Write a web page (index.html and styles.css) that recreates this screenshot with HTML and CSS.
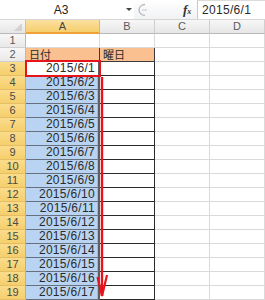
FILE: index.html
```html
<!DOCTYPE html>
<html lang="ja">
<head>
    <meta charset="UTF-8">
    <title>日付 - Excel</title>
    <link rel="stylesheet" href="styles.css">
</head>
<body>
    <div class="page">
        <div class="fbar">
            <div class="namebox"><span class="ref">A3</span><span class="drop"></span></div>
            <div class="grip">
                <svg width="14" height="14" viewBox="0 0 14 14">
                    <path d="M10 1.5 A6 5.5 0 0 0 10 12.5" fill="none" stroke="#b4b8be" stroke-width="1.3"/>
                    <path d="M7 7 H12" stroke="#c2c5ca" stroke-width="1"/>
                </svg>
            </div>
            <div class="fx"><i>f</i><small>x</small></div>
            <div class="formula">2015/6/1</div>
        </div>

        <div class="sheet">
            <div class="corner"><span class="tri"></span></div>
            <div class="col-head sel">A</div>
            <div class="col-head">B</div>
            <div class="col-head">C</div>
            <div class="col-head">D</div>

            <div class="row-head">1</div><div class="cell"></div><div class="cell"></div><div class="cell"></div><div class="cell"></div>
            <div class="row-head">2</div><div class="cell title">日付</div><div class="cell title last">曜日</div><div class="cell"></div><div class="cell"></div>
            <div class="row-head sel">3</div><div class="cell date active">2015/6/1</div><div class="cell boxed"></div><div class="cell"></div><div class="cell"></div>
            <div class="row-head sel">4</div><div class="cell date pick">2015/6/2</div><div class="cell boxed"></div><div class="cell"></div><div class="cell"></div>
            <div class="row-head sel">5</div><div class="cell date pick">2015/6/3</div><div class="cell boxed"></div><div class="cell"></div><div class="cell"></div>
            <div class="row-head sel">6</div><div class="cell date pick">2015/6/4</div><div class="cell boxed"></div><div class="cell"></div><div class="cell"></div>
            <div class="row-head sel">7</div><div class="cell date pick">2015/6/5</div><div class="cell boxed"></div><div class="cell"></div><div class="cell"></div>
            <div class="row-head sel">8</div><div class="cell date pick">2015/6/6</div><div class="cell boxed"></div><div class="cell"></div><div class="cell"></div>
            <div class="row-head sel">9</div><div class="cell date pick">2015/6/7</div><div class="cell boxed"></div><div class="cell"></div><div class="cell"></div>
            <div class="row-head sel">10</div><div class="cell date pick">2015/6/8</div><div class="cell boxed"></div><div class="cell"></div><div class="cell"></div>
            <div class="row-head sel">11</div><div class="cell date pick">2015/6/9</div><div class="cell boxed"></div><div class="cell"></div><div class="cell"></div>
            <div class="row-head sel">12</div><div class="cell date pick">2015/6/10</div><div class="cell boxed"></div><div class="cell"></div><div class="cell"></div>
            <div class="row-head sel">13</div><div class="cell date pick">2015/6/11</div><div class="cell boxed"></div><div class="cell"></div><div class="cell"></div>
            <div class="row-head sel">14</div><div class="cell date pick">2015/6/12</div><div class="cell boxed"></div><div class="cell"></div><div class="cell"></div>
            <div class="row-head sel">15</div><div class="cell date pick">2015/6/13</div><div class="cell boxed"></div><div class="cell"></div><div class="cell"></div>
            <div class="row-head sel">16</div><div class="cell date pick">2015/6/14</div><div class="cell boxed"></div><div class="cell"></div><div class="cell"></div>
            <div class="row-head sel">17</div><div class="cell date pick">2015/6/15</div><div class="cell boxed"></div><div class="cell"></div><div class="cell"></div>
            <div class="row-head sel">18</div><div class="cell date pick">2015/6/16</div><div class="cell boxed"></div><div class="cell"></div><div class="cell"></div>
            <div class="row-head sel">19</div><div class="cell date pick">2015/6/17</div><div class="cell boxed"></div><div class="cell"></div><div class="cell"></div>
        </div>

        <!-- annotations drawn over the sheet -->
        <div class="mark"></div>
        <svg class="arrow" width="265" height="300" viewBox="0 0 265 300">
            <path d="M102 77 V296" stroke="#e8141c" stroke-width="2.4" fill="none"/>
            <path d="M97.5 277 L102 296 L107 275" stroke="#e8141c" stroke-width="2.2" fill="none"/>
        </svg>
    </div>
</body>
</html>
```

FILE: styles.css
```css
body {
    margin: 0;
    background: #ffffff;
    font-family: "Liberation Sans", "Noto Sans CJK JP", sans-serif;
    color: #2a2a2a;
    overflow: hidden;
}
.page {
    position: relative;
    width: 265px;
    height: 300px;
    overflow: hidden;
}
.fbar {
    height: 20px;
    display: flex;
    box-sizing: border-box;
    border-bottom: 1px solid #d5d5d5;
    background: #ffffff;
}
.namebox {
    width: 134px;
    display: flex;
    align-items: center;
    font-size: 12px;
    color: #222;
}
.namebox .ref {
    width: 122px;
    text-align: center;
}
.namebox .drop {
    width: 0;
    height: 0;
    margin-left: 4px;
    border-left: 3px solid transparent;
    border-right: 3px solid transparent;
    border-top: 3px solid #444;
}
.grip {
    width: 44px;
    display: flex;
    align-items: center;
    padding-left: 1px;
    background: linear-gradient(#ffffff, #f1f2f4);
}
.fx {
    width: 18px;
    display: flex;
    align-items: center;
    font-family: "Liberation Serif", serif;
    font-weight: bold;
    color: #333;
    background: linear-gradient(#ffffff, #f1f2f4);
}
.fx i {
    font-size: 13px;
    margin-left: 4px;
}
.fx small {
    font-size: 8px;
    font-style: italic;
    margin-top: 4px;
}
.formula {
    flex: 1;
    border-left: 1px solid #c9c9c9;
    border-top: 1px solid #dcdcdc;
    padding-left: 4px;
    font-size: 12px;
    letter-spacing: 0.3px;
    line-height: 18px;
}
.sheet {
    display: grid;
    grid-template-columns: 26px 74px 55px 55px 55px;
    grid-auto-rows: 14px;
    font-size: 12px;
}
.sheet > div {
    box-sizing: border-box;
}
.corner {
    position: relative;
    background: linear-gradient(#f7f7f7, #e6e6e6);
    border-right: 1px solid #c2c2c2;
    border-bottom: 1px solid #b9b9b9;
}
.corner .tri {
    position: absolute;
    right: 3px;
    bottom: 2px;
    width: 0;
    height: 0;
    border-left: 8px solid transparent;
    border-bottom: 8px solid #d2d2d2;
}
.col-head {
    background: linear-gradient(#f7f7f7, #e6e6e6);
    border-right: 1px solid #cfcfcf;
    border-bottom: 1px solid #b9b9b9;
    text-align: center;
    font-size: 11px;
    line-height: 13px;
    color: #5a5a5a;
}
.col-head.sel {
    background: linear-gradient(#fbe0a0, #f6cf6e);
    border-right-color: #e2b563;
    border-bottom: 2px solid #f0a33a;
    color: #444;
}
.row-head {
    background: linear-gradient(#f7f7f7, #e9e9e9);
    border-right: 1px solid #b9b9b9;
    border-bottom: 1px solid #d0d0d0;
    text-align: center;
    font-size: 11px;
    line-height: 13px;
    color: #5a5a5a;
}
.row-head.sel {
    background: linear-gradient(#fadc8c, #f6cf6c);
    border-right: 1px solid #f0a33a;
    border-bottom-color: #e4bd66;
    color: #4a4a4a;
}
.cell {
    border-right: 1px solid #dadada;
    border-bottom: 1px solid #dadada;
    line-height: 13px;
    white-space: nowrap;
}
.cell.title {
    background: #fac090;
    font-family: "Noto Sans CJK JP", sans-serif;
    font-size: 11px;
    padding-left: 3px;
    border-right: 1px solid #3a3a3a;
    border-bottom: 1px solid #3a3a3a;
    line-height: 13px;
}
.cell.date {
    text-align: right;
    padding-right: 3px;
    letter-spacing: 0.3px;
    border-bottom: 1px solid #66707e;
    border-right: 2px solid #5e5e5e;
}
.cell.pick {
    background: #b8d4f2;
    box-shadow: inset -1px 0 0 #a9b7c6;
}
.cell.active {
    background: #ffffff;
}
.cell.boxed {
    border-right: 1px solid #2a2a2a;
    border-bottom: 1px solid #2a2a2a;
}
.mark {
    position: absolute;
    left: 25px;
    top: 60px;
    width: 76px;
    height: 17px;
    box-sizing: border-box;
    border: 2px solid #e8141c;
}
.arrow {
    position: absolute;
    left: 0;
    top: 0;
}
```
